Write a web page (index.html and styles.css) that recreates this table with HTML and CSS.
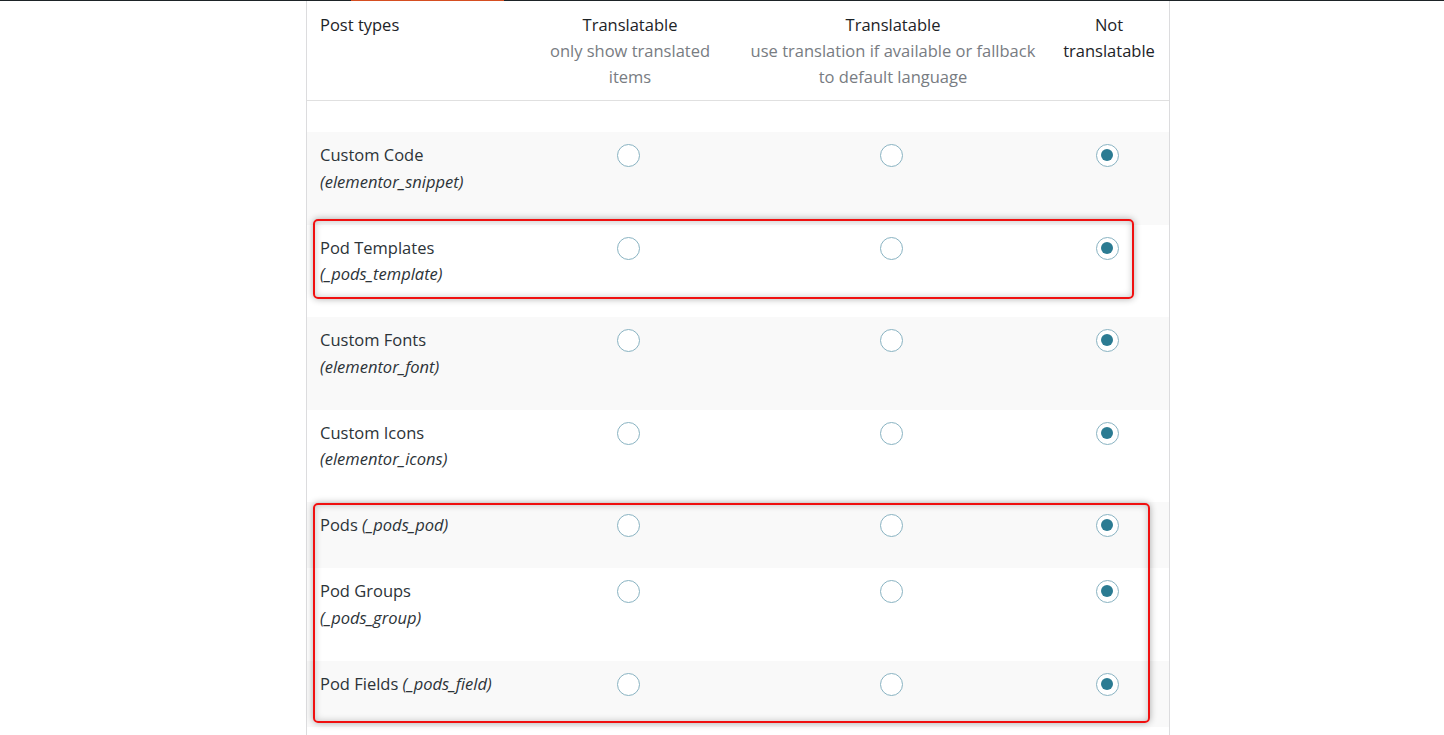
FILE: index.html
```html
<!DOCTYPE html>
<html>
<head>
<meta charset="utf-8">
<link rel="stylesheet" href="styles.css">
</head>
<body>
<div class="topbar"><span class="topbar-gap"></span><span class="topbar-active"></span></div>
<div class="panel">
  <table class="types">
    <colgroup>
      <col class="c-name"><col class="c-trans"><col class="c-fallback"><col class="c-not">
    </colgroup>
    <thead>
      <tr>
        <th class="th-name">Post types</th>
        <th class="th-opt">Translatable<span class="sub">only show translated items</span></th>
        <th class="th-opt th-wide">Translatable<span class="sub">use translation if available or fallback to default language</span></th>
        <th class="th-opt th-narrow">Not translatable</th>
      </tr>
    </thead>
    <tbody>
      <tr class="spacer"><td colspan="4"></td></tr>
      <tr class="alt"><td class="name">Custom Code<br><em>(elementor_snippet)</em></td><td class="opt"><span class="radio"></span></td><td class="opt"><span class="radio"></span></td><td class="opt"><span class="radio on"></span></td></tr>
      <tr><td class="name">Pod Templates<br><em>(_pods_template)</em></td><td class="opt"><span class="radio"></span></td><td class="opt"><span class="radio"></span></td><td class="opt"><span class="radio on"></span></td></tr>
      <tr class="alt"><td class="name">Custom Fonts<br><em>(elementor_font)</em></td><td class="opt"><span class="radio"></span></td><td class="opt"><span class="radio"></span></td><td class="opt"><span class="radio on"></span></td></tr>
      <tr><td class="name">Custom Icons<br><em>(elementor_icons)</em></td><td class="opt"><span class="radio"></span></td><td class="opt"><span class="radio"></span></td><td class="opt"><span class="radio on"></span></td></tr>
      <tr class="alt"><td class="name">Pods <em>(_pods_pod)</em></td><td class="opt"><span class="radio"></span></td><td class="opt"><span class="radio"></span></td><td class="opt"><span class="radio on"></span></td></tr>
      <tr><td class="name">Pod Groups<br><em>(_pods_group)</em></td><td class="opt"><span class="radio"></span></td><td class="opt"><span class="radio"></span></td><td class="opt"><span class="radio on"></span></td></tr>
      <tr class="alt"><td class="name">Pod Fields <em>(_pods_field)</em></td><td class="opt"><span class="radio"></span></td><td class="opt"><span class="radio"></span></td><td class="opt"><span class="radio on"></span></td></tr>
    </tbody>
  </table>
</div>
<div class="mark mark-1"></div>
<div class="mark mark-2"></div>
</body>
</html>
```
FILE: styles.css
```css
html, body {
  margin: 0;
  padding: 0;
  background: #fff;
}
body {
  font-family: "Open Sans", "Noto Sans", sans-serif;
  font-size: 16.5px;
  color: #2c3338;
  height: 735px;
  overflow: hidden;
  position: relative;
}
.topbar {
  display: flex;
  height: 1px;
  background: #1d2327;
}
.topbar-gap { width: 351px; }
.topbar-active { width: 153px; background: #d54e21; }

.panel {
  margin-left: 306px;
  width: 862px;
  border-left: 1px solid #dcdcde;
  border-right: 1px solid #dcdcde;
  height: 734px;
}
.types {
  width: 862px;
  border-collapse: collapse;
  table-layout: fixed;
}
.c-name { width: 216px; }
.c-trans { width: 214px; }
.c-fallback { width: 312px; }
.c-not { width: 120px; }

.types th {
  font-weight: 400;
  line-height: 26px;
  padding: 11px 10px 10px;
  vertical-align: top;
  border-bottom: 1px solid #e0e0e0;
  color: #1d2327;
}
.types .th-name { text-align: left; padding-left: 13px; }
.types .th-opt { text-align: center; padding-left: 22px; padding-right: 22px; }
.types .th-wide { padding-left: 4px; padding-right: 4px; }
.types .th-narrow { padding-left: 6px; padding-right: 6px; }
.sub { display: block; color: #787c82; }

.types .spacer td { height: 31px; padding: 0; background: #fff; }

.types td {
  line-height: 26.5px;
  vertical-align: top;
  padding: 10px 10px 29.5px;
}
.types tr.alt td { background: #f9f9f9; }
.types td.name { padding-left: 13px; }
.types td.opt { text-align: center; padding-right: 14px; padding-left: 10px; }
.types em { font-style: italic; }

.radio {
  display: inline-block;
  box-sizing: border-box;
  width: 23px;
  height: 23px;
  margin-top: 2px;
  border: 1.5px solid #89b3c2;
  border-radius: 50%;
  background: #fff;
  vertical-align: top;
  position: relative;
}
.radio.on::after {
  content: "";
  position: absolute;
  left: 4px;
  top: 4px;
  width: 12px;
  height: 12px;
  border-radius: 50%;
  background: #2b7b92;
}

.mark {
  position: absolute;
  box-sizing: border-box;
  border: 2px solid #f01010;
  border-radius: 5px;
  box-shadow: 0 0 7px rgba(0,0,0,0.32), inset 0 0 7px rgba(0,0,0,0.22);
}
.mark-1 { left: 313px; top: 219px; width: 821px; height: 80px; }
.mark-2 { left: 313px; top: 503px; width: 837px; height: 220px; }
```
